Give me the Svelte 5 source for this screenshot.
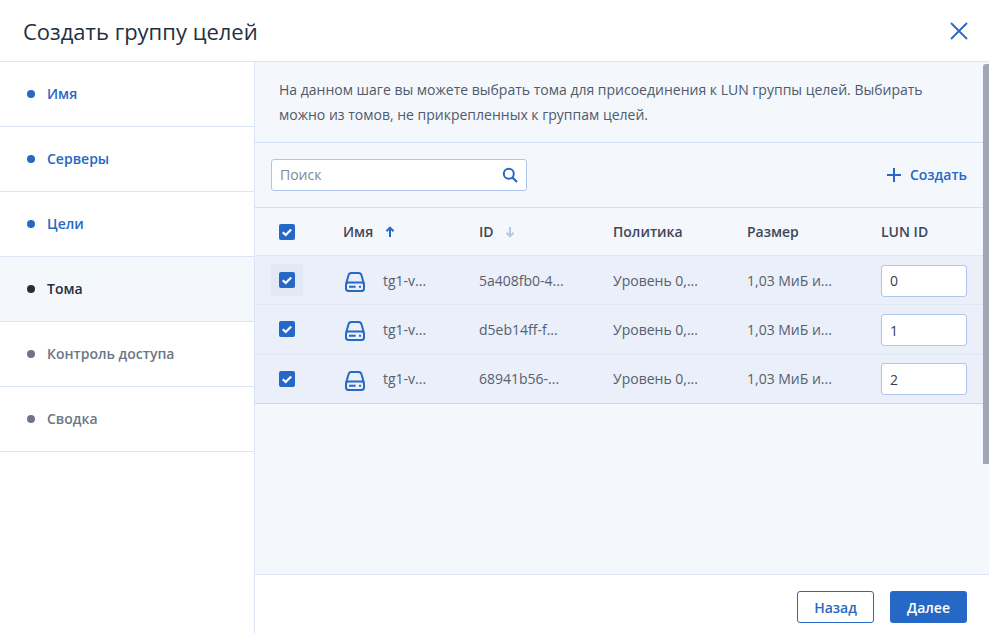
<script>
let steps = [
    { name: "Имя", state: "done" },
    { name: "Серверы", state: "done" },
    { name: "Цели", state: "done" },
    { name: "Тома", state: "active" },
    { name: "Контроль доступа", state: "todo" },
    { name: "Сводка", state: "todo" }
];

let rows = [
    { name: "tg1-v...", id: "5a408fb0-4...", lun: "0" },
    { name: "tg1-v...", id: "d5eb14ff-f...", lun: "1" },
    { name: "tg1-v...", id: "68941b56-...", lun: "2" }
];
</script>

{#snippet check()}
    <span class="check">
        <svg width="16" height="16" viewBox="0 0 16 16"><path d="M3.8 8.3l2.9 2.7 5.5-5.6" fill="none" stroke="#fff" stroke-width="2.2"/></svg>
    </span>
{/snippet}

<div class="dialog">
    <header>
        <h1>Создать группу целей</h1>
        <button class="close" aria-label="Закрыть">
            <svg width="18" height="18" viewBox="0 0 18 18"><path d="M1 1l16 16M17 1L1 17" fill="none" stroke="#2668c5" stroke-width="1.8"/></svg>
        </button>
    </header>

    <div class="body">
        <nav>
            {#each steps as step}
                <div class="step {step.state}">
                    <i></i>
                    <span>{step.name}</span>
                </div>
            {/each}
        </nav>

        <div class="main">
            <div class="scroll">
                <p class="intro">На данном шаге вы можете выбрать тома для присоединения к LUN группы целей. Выбирать можно из томов, не прикрепленных к группам целей.</p>

                <div class="toolbar">
                    <div class="search">
                        <span>Поиск</span>
                        <svg width="16" height="16" viewBox="0 0 16 16"><circle cx="6.8" cy="6.8" r="5" fill="none" stroke="#2668c5" stroke-width="2"/><path d="M10.5 10.5l4.5 4.5" stroke="#2668c5" stroke-width="2.2"/></svg>
                    </div>
                    <button class="create">
                        <svg width="16" height="16" viewBox="0 0 16 16"><path d="M8 1v14M1 8h14" stroke="#2668c5" stroke-width="2"/></svg>
                        Создать
                    </button>
                </div>

                <div class="table">
                    <div class="row head">
                        <div class="cb">{@render check()}</div>
                        <div>Имя
                            <svg class="sort" width="12" height="12" viewBox="0 0 12 12"><path d="M6 11V2M2.5 5.2L6 1.6l3.5 3.6" fill="none" stroke="#2668c5" stroke-width="2"/></svg>
                        </div>
                        <div>ID
                            <svg class="sort" width="12" height="12" viewBox="0 0 12 12"><path d="M6 1v9M2.5 6.8L6 10.4l3.5-3.6" fill="none" stroke="#b3c9ea" stroke-width="2"/></svg>
                        </div>
                        <div>Политика</div>
                        <div>Размер</div>
                        <div>LUN ID</div>
                    </div>
                    {#each rows as row, i}
                        <div class="row item">
                            <div class="cb"><span class="hit" class:hover={i === 0}>{@render check()}</span></div>
                            <div class="name">
                                <svg width="20" height="20" viewBox="0 0 20 20" fill="none" stroke="#2668c5" stroke-width="2">
                                    <path d="M1.2 11.5L3.4 3.6C3.8 1.9 4.8 1 6.4 1h7.2c1.6 0 2.6 .9 3 2.6L18.8 11.5"/>
                                    <rect x="1" y="10.6" width="18" height="8.4" rx="2.4"/>
                                    <path d="M4 14.8h6.6M14 14.8h2"/>
                                </svg>
                                <span>{row.name}</span>
                            </div>
                            <div>{row.id}</div>
                            <div>Уровень 0,...</div>
                            <div>1,03 МиБ и...</div>
                            <div class="lun"><input value={row.lun} /></div>
                        </div>
                    {/each}
                </div>
            </div>
            <div class="thumb"></div>

            <footer>
                <button class="btn back">Назад</button>
                <button class="btn next">Далее</button>
            </footer>
        </div>
    </div>
</div>

<style>
:global(body) {
    background: #fff;
}

.dialog {
    width: 989px;
    height: 633px;
    display: flex;
    flex-direction: column;
    overflow: hidden;
    font-family: "Open Sans", "Noto Sans", sans-serif;
    font-size: 14px;
    color: #374050;
    background: #fff;
}

header {
    height: 61px;
    flex: none;
    display: flex;
    align-items: center;
    justify-content: space-between;
    padding: 0 21px 0 23px;
    border-bottom: 1px solid #dbe5f4;
    box-sizing: content-box;
}

h1 {
    margin: 0;
    font-size: 22px;
    font-weight: 400;
    color: #243041;
}

button {
    font: inherit;
    padding: 0;
    background: none;
    border: none;
}

.close {
    width: 18px;
    height: 18px;
    display: block;
}

.body {
    flex: 1;
    display: flex;
    min-height: 0;
}

nav {
    width: 254px;
    flex: none;
    border-right: 1px solid #dbe5f4;
    box-sizing: content-box;
}

.step {
    height: 64px;
    display: flex;
    align-items: center;
    gap: 12px;
    padding-left: 27px;
    border-bottom: 1px solid #dbe5f4;
    font-weight: 600;
    box-sizing: content-box;
}

.step span {
    margin-top: -1px;
}

.step i {
    width: 8px;
    height: 8px;
    margin-top: -1px;
    border-radius: 50%;
    background: currentColor;
}

.step.done {
    color: #2668c5;
}

.step.active {
    color: #243041;
    background: #f4f7fc;
}

.step.active i {
    background: #243041;
}

.step.todo {
    color: #6c7686;
}

.main {
    flex: 1;
    position: relative;
    display: flex;
    flex-direction: column;
    min-width: 0;
}

.scroll {
    flex: 1;
    background: #f4f7fc;
}

.intro {
    margin: 0;
    height: 81px;
    box-sizing: border-box;
    padding: 15px 60px 0 24px;
    line-height: 25px;
    color: #4f5a6b;
    border-bottom: 1px solid #d4e1f5;
}

.toolbar {
    height: 65px;
    box-sizing: border-box;
    display: flex;
    align-items: center;
    justify-content: space-between;
    padding: 0 22px 1px 16px;
    border-bottom: 1px solid #d4e1f5;
}

.search {
    width: 256px;
    height: 32px;
    box-sizing: border-box;
    display: flex;
    align-items: center;
    justify-content: space-between;
    padding: 0 8px;
    background: #fff;
    border: 1px solid #aec6ec;
    border-radius: 3px;
    color: #808894;
}

.create {
    display: flex;
    align-items: center;
    gap: 8px;
    color: #2668c5;
    font-weight: 600;
}

.row {
    display: grid;
    grid-template-columns: 72px 136px 134px 134px 134px 86px;
    padding-left: 16px;
    align-items: center;
}

.row > div {
    white-space: nowrap;
}

.head {
    height: 48px;
    box-sizing: border-box;
    border-bottom: 1px solid #dde7f5;
    font-weight: 600;
    color: #3e4757;
}

.sort {
    margin-left: 7px;
    vertical-align: -1px;
}

.item {
    height: 49.33px;
    box-sizing: border-box;
    background: #eaeff9;
    border-bottom: 1px solid #dde7f5;
    color: #566070;
}

.item:last-child {
    border-bottom-color: #c9d8ef;
}

.cb {
    display: flex;
    padding-left: 8px;
}

.check {
    width: 16px;
    height: 16px;
    display: block;
    background: #2668c5;
    border-radius: 2px;
}

.hit {
    display: block;
}

.hit.hover {
    margin: -8px;
    padding: 8px;
    background: #e2e9f5;
    border-radius: 3px;
}

.name {
    display: flex;
    align-items: center;
    gap: 18px;
    padding-left: 2px;
}

.name svg {
    margin-top: 4px;
}

.row > .lun {
    align-self: start;
    padding-top: 8.7px;
}

input {
    width: 86px;
    height: 32px;
    box-sizing: border-box;
    display: block;
    padding: 0 8px;
    font: inherit;
    color: #374050;
    background: #fff;
    border: 1px solid #aec6ec;
    border-radius: 3px;
}

.thumb {
    position: absolute;
    top: 2px;
    right: 0;
    width: 6px;
    height: 400px;
    background: #a0a7b2;
    border-radius: 3px 0 0 0;
}

footer {
    height: 59px;
    flex: none;
    display: flex;
    justify-content: flex-end;
    gap: 16px;
    padding: 16px 22px 0 0;
    border-top: 1px solid #dbe5f4;
    background: #fff;
    box-sizing: border-box;
}

.btn {
    width: 77px;
    height: 32px;
    box-sizing: border-box;
    border-radius: 3px;
    font-weight: 600;
}

.back {
    color: #2668c5;
    border: 1px solid #2668c5;
    background: #fff;
}

.next {
    color: #fff;
    background: #2668c5;
}
</style>
